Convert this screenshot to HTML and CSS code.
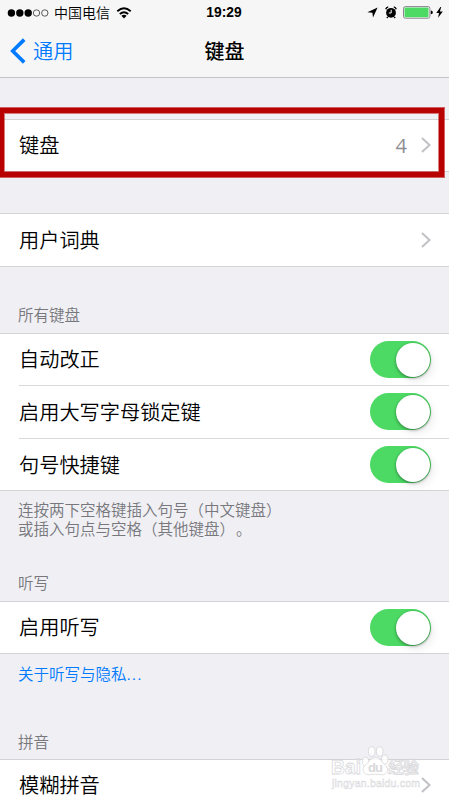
FILE: index.html
```html
<!DOCTYPE html>
<html lang="zh-CN">
<head>
    <meta charset="UTF-8">
    <meta name="viewport" content="width=device-width, initial-scale=1.0">
    <title>键盘</title>
    <link rel="stylesheet" href="styles.css">
</head>
<body>
    <header>
        <div class="status-bar">
            <div class="status-left">
                <svg class="signal" width="43" height="10" viewBox="0 0 43 10">
                    <circle cx="4.4" cy="5" r="3.7"/>
                    <circle cx="12.8" cy="5" r="3.7"/>
                    <circle cx="21.2" cy="5" r="3.7"/>
                    <circle class="empty" cx="29.5" cy="5" r="3.2"/>
                    <circle class="empty" cx="37.8" cy="5" r="3.2"/>
                </svg>
                <span class="carrier">中国电信</span>
                <svg class="wifi" width="16" height="12" viewBox="0 0 16 12">
                    <path class="arc" d="M1.3 4.3Q8 -1.6 14.7 4.3M3.8 7Q8 3.4 12.2 7"/>
                    <path d="M5.4 8.7Q8 6.6 10.6 8.7L8 11.4Z"/>
                </svg>
            </div>
            <span class="time">19:29</span>
            <div class="status-right">
                <svg class="location" width="11" height="11" viewBox="0 0 11 11"><path d="M10.6 0.4L6 10.4L5.4 5.7L0.4 5.2Z"/></svg>
                <svg class="alarm" width="12" height="13" viewBox="0 0 12 13">
                    <circle cx="6" cy="6.8" r="4.9"/>
                    <path class="bell" d="M0.7 3.2Q1.3 1.4 3.2 0.9M11.3 3.2Q10.7 1.4 8.8 0.9M2.8 10.8L1.8 12M9.2 10.8L10.2 12"/>
                    <path class="hands" d="M6.2 3.8V7H3.8"/>
                </svg>
                <svg class="battery" width="30" height="13" viewBox="0 0 30 13">
                    <rect class="case" x="0.5" y="0.6" width="26.4" height="11.6" rx="1.8"/>
                    <rect class="charge" x="1.5" y="1.6" width="24" height="9.6" rx="0.6"/>
                    <path d="M27.8 4.5Q29.8 4.7 29.8 6.4Q29.8 8.1 27.8 8.3Z"/>
                </svg>
                <svg class="bolt" width="7" height="11" viewBox="0 0 7 11"><path d="M4.4 0L0.3 6H3L2.1 10.8L6.8 4.6H3.9L5.2 0Z"/></svg>
            </div>
        </div>
        <nav class="nav-bar">
            <a class="back">
                <svg width="16" height="26" viewBox="0 0 16 26"><path d="M14.2 1.6L2.7 13L14.2 24.4"/></svg>
                <span>通用</span>
            </a>
            <h1>键盘</h1>
        </nav>
    </header>

    <main>
        <div class="group first">
            <div class="row">
                <span>键盘</span>
                <span class="value">4</span>
                <svg class="chevron" width="10" height="16" viewBox="0 0 10 16"><path d="M1 1L8.5 8L1 15"/></svg>
            </div>
            <div class="highlight"></div>
        </div>

        <div class="group">
            <div class="row tall">
                <span>用户词典</span>
                <svg class="chevron" width="10" height="16" viewBox="0 0 10 16"><path d="M1 1L8.5 8L1 15"/></svg>
            </div>
        </div>

        <!-- 所有键盘 -->
        <h2 class="after-row">所有键盘</h2>
        <div class="group">
            <div class="row"><span>自动改正</span><div class="switch"></div></div>
            <div class="row tall"><span>启用大写字母锁定键</span><div class="switch"></div></div>
            <div class="row last"><span>句号快捷键</span><div class="switch"></div></div>
        </div>
        <p class="note">连按两下空格键插入句号（中文键盘）<br>或插入句点与空格（其他键盘）<span class="stop">。</span></p>

        <!-- 听写 -->
        <h2 class="after-note">听写</h2>
        <div class="group">
            <div class="row"><span>启用听写</span><div class="switch"></div></div>
        </div>
        <p class="note link"><a>关于听写与隐私<span class="dots">...</span></a></p>

        <!-- 拼音 -->
        <h2 class="after-link">拼音</h2>
        <div class="group">
            <div class="row">
                <span>模糊拼音</span>
                <svg class="chevron" width="10" height="16" viewBox="0 0 10 16"><path d="M1 1L8.5 8L1 15"/></svg>
            </div>
        </div>
    </main>

    <svg class="watermark" width="92" height="46" viewBox="0 0 92 46">
        <text class="brand" x="0" y="28.5" textLength="30" lengthAdjust="spacingAndGlyphs">Bai</text>
        <g class="paw">
            <ellipse cx="34.5" cy="16.5" rx="3.2" ry="4.4"/>
            <ellipse cx="40.7" cy="6.5" rx="3.3" ry="4.8"/>
            <ellipse cx="48.7" cy="6.5" rx="3.3" ry="4.8"/>
            <ellipse cx="53.8" cy="14.5" rx="3.2" ry="4.6"/>
            <path d="M44.5 12.5C39.5 12.5 37.5 18 34 20.5C30 24 32.5 30 37.5 29.8C42 29 47 29 51 29.8C56.5 30 58.5 24 54.5 20.5C51 18 49.5 12.5 44.5 12.5Z"/>
        </g>
        <text class="du" x="37" y="27" textLength="15">du</text>
        <text class="cn" x="57" y="28" textLength="31">经验</text>
        <text class="site" x="1" y="42" textLength="88">jingyan.baidu.com</text>
    </svg>
</body>
</html>
```
FILE: styles.css
```css
* { box-sizing: border-box; }
body { margin: 0; height: 800px; overflow: hidden; position: relative; background: #efeff4; color: #000; font-family: "Liberation Sans", "Noto Sans CJK SC", sans-serif; text-spacing-trim: space-all; }
svg { display: block; flex: none; }

/* header */
header { height: 78px; background: #f6f6f6; border-bottom: 1px solid #c4c4c6; }
.status-bar { height: 25px; display: grid; grid-template-columns: 1fr auto 1fr; align-items: center; padding: 0 6px 0 7px; }
.status-left, .status-right { display: flex; align-items: center; }
.status-right { justify-content: flex-end; }
.signal { margin-right: 4px; }
.signal .empty { fill: none; stroke: #333; stroke-width: 0.8; }
.carrier { font-size: 14px; line-height: 25px; font-weight: 350; font-family: "Noto Sans CJK SC", sans-serif; margin-right: 6px; }
.wifi .arc { fill: none; stroke: #000; stroke-width: 1.9; }
.time { font-size: 13.8px; font-weight: bold; margin-left: -2px; }
.location { margin-right: 7px; }
.alarm { margin-right: 6px; }
.alarm .bell { fill: none; stroke: #000; stroke-width: 1.3; }
.alarm .hands { fill: none; stroke: #fff; stroke-width: 1; }
.battery { margin-right: 3px; }
.battery .case { fill: #fff; stroke: #8b8290; stroke-width: 1; }
.battery .charge { fill: #4cd964; }

.nav-bar { height: 52px; display: grid; grid-template-columns: 1fr auto 1fr; align-items: center; }
.back { display: flex; align-items: center; gap: 7px; padding-left: 10px; color: #007aff; font-size: 20.2px; line-height: 52px; font-weight: 350; }
.back svg { margin-top: -2px; }
.back span { padding-top: 1px; }
.back path { fill: none; stroke: #007aff; stroke-width: 3.6; }
h1 { margin: 0; font-size: 20px; line-height: 52px; font-weight: 500; }

/* list */
.group { background: #fff; border-top: 1px solid #d3d3d6; border-bottom: 1px solid #d3d3d6; }
.first { position: relative; margin: 41px 0; }
.row { height: 51px; display: flex; align-items: center; padding-right: 18px; margin-left: 19px; font-size: 20.2px; line-height: 51px; font-weight: 350; }
.tall { height: 52px; }
.row + .row { height: 52px; border-top: 1px solid #d9d9dc; }
.row + .tall { height: 53px; }
.row + .last { padding-top: 1px; }
.row span:first-child { flex: 1; padding-top: 2px; }
.row .value { color: #8e8e93; font-family: "Open Sans", sans-serif; font-size: 20px; font-weight: 400; margin-right: 14px; }
.chevron { margin-top: -1px; }
.chevron path { fill: none; stroke: #c2c2c7; stroke-width: 2.1; }
h2 { margin: 0; padding-left: 18px; font-size: 15.5px; font-weight: 350; line-height: 24px; color: #77777c; }
.after-row { height: 66px; padding-top: 37px; }
.after-note { height: 63px; padding-top: 34px; }
.after-link { height: 63px; padding-top: 35px; }
.note { margin: 0; height: 47px; padding: 10px 0 0 18px; font-size: 15.5px; line-height: 19px; font-weight: 350; color: #77777c; }
.stop { margin-left: 1px; }
.link { height: 42px; padding-top: 11px; color: #007aff; }
.dots { letter-spacing: 1px; }

.switch { width: 61px; height: 37px; margin-top: -1px; border-radius: 19px; background: #4cd964; padding: 2px 1px; display: flex; justify-content: flex-end; }
.switch::after { content: ""; width: 34px; height: 34px; border-radius: 50%; background: #fff; box-shadow: 0 1px 3px rgba(0, 0, 0, 0.4), 3px 4px 8px rgba(0, 0, 0, 0.08); }

/* lies over the first group */
.highlight { position: absolute; left: -1px; top: -12px; width: 445px; height: 69px; border: 5px solid #b90000; box-shadow: 0 0 0 1px rgba(185, 0, 0, 0.6), inset 0 0 0 1px rgba(185, 0, 0, 0.5); }

.watermark { position: absolute; left: 331px; top: 745px; fill: #fff; stroke: #d2d2d6; stroke-width: 0.8; opacity: 0.85; }
.watermark .brand { font: bold 21px "Liberation Sans", sans-serif; }
.watermark .cn { font: 500 16px "Noto Sans CJK SC", sans-serif; }
.watermark .du { font: bold 13px "Liberation Sans", sans-serif; fill: #d2d2d6; stroke: none; }
.watermark .site { font: 10.5px "Liberation Sans", sans-serif; stroke-width: 0.5; }
```
